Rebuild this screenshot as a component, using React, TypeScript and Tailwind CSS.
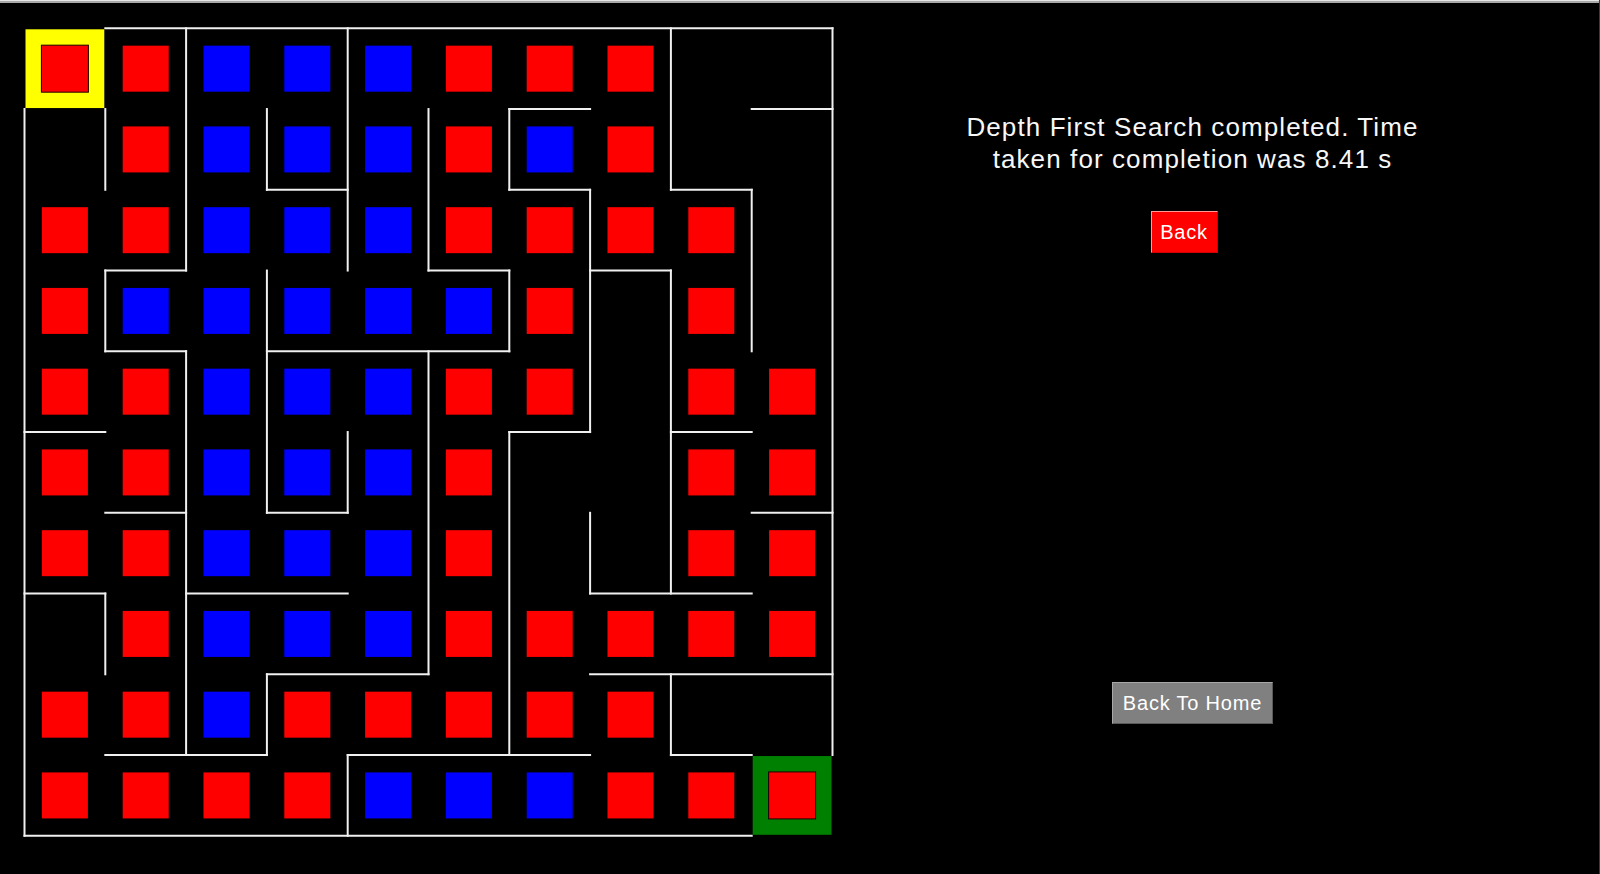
import React from 'react';

const CELL_W = 80.8;
const CELL_H = 80.75;
const OX = 2.5;
const OY = 2.3;
const SQ = 46;

// S = start, E = end, R = visited, B = path, . = not reached
const GRID = [
  'SRBBBRRR..',
  '.RBBBRBR..',
  'RRBBBRRRR.',
  'RBBBBBR.R.',
  'RRBBBRR.RR',
  'RRBBBR..RR',
  'RRBBBR..RR',
  '.RBBBRRRRR',
  'RRBRRRRR..',
  'RRRRBBBRRE',
];

// [row line, from col, to col]
const H_WALLS: [number, number, number][] = [
  [0, 1, 10], [10, 0, 9],
  [1, 9, 10], [1, 6, 7],
  [2, 3, 4], [2, 6, 7], [2, 8, 9],
  [3, 1, 2], [3, 5, 6], [3, 7, 8],
  [4, 1, 2], [4, 3, 6],
  [5, 0, 1], [5, 6, 7], [5, 8, 9],
  [6, 1, 2], [6, 3, 4], [6, 9, 10],
  [7, 0, 1], [7, 2, 4], [7, 7, 9],
  [8, 3, 5], [8, 7, 10],
  [9, 1, 3], [9, 4, 7], [9, 8, 9],
];

// [col line, from row, to row]
const V_WALLS: [number, number, number][] = [
  [0, 1, 10], [10, 0, 9],
  [1, 1, 2], [1, 3, 4], [1, 7, 8],
  [2, 0, 3], [2, 4, 9],
  [3, 1, 2], [3, 3, 6], [3, 8, 9],
  [4, 0, 3], [4, 5, 6], [4, 9, 10],
  [5, 1, 3], [5, 4, 8],
  [6, 1, 2], [6, 3, 4], [6, 5, 9],
  [7, 2, 5], [7, 6, 7],
  [8, 0, 2], [8, 3, 7], [8, 8, 9],
  [9, 2, 4],
];

const gx = (c: number) => OX + c * CELL_W;
const gy = (r: number) => OY + r * CELL_H;

const Maze: React.FC = () => {
  const pad = (CELL_W - SQ) / 2;
  const padY = (CELL_H - SQ) / 2;

  return (
    <svg width={814} height={814} viewBox="0 0 814 814" className="block shrink-0">
      {H_WALLS.map(([r, a, b], i) => (
        <line key={`h${i}`} x1={gx(a)} y1={gy(r)} x2={gx(b)} y2={gy(r)} stroke="#f0f0f0" strokeWidth={2} strokeLinecap="square" />
      ))}
      {V_WALLS.map(([c, a, b], i) => (
        <line key={`v${i}`} x1={gx(c)} y1={gy(a)} x2={gx(c)} y2={gy(b)} stroke="#f0f0f0" strokeWidth={2} strokeLinecap="square" />
      ))}

      {GRID.map((row, r) =>
        row.split('').map((cell, c) => {
          const x = gx(c);
          const y = gy(r);
          if (cell === 'S' || cell === 'E') {
            return (
              <g key={`${r}-${c}`}>
                <rect x={x + 1} y={y + 1} width={CELL_W - 2} height={CELL_H - 2} fill={cell === 'S' ? '#ffff00' : '#008000'} />
                <rect x={x + pad - 0.5} y={y + padY - 0.5} width={SQ + 1} height={SQ + 1} fill="#ff0000" stroke="#1a0000" strokeWidth={1} />
              </g>
            );
          }
          if (cell === '.') return null;
          return (
            <rect
              key={`${r}-${c}`}
              x={x + pad}
              y={y + padY}
              width={SQ}
              height={SQ}
              fill={cell === 'B' ? '#0000ff' : '#ff0000'}
            />
          );
        })
      )}
    </svg>
  );
};

export default function App() {
  return (
    <div className="w-full h-[874px] bg-black overflow-hidden flex flex-col border-r border-[#3a3a3a] font-['Liberation_Sans',Arial,sans-serif]">
      {/* window edge */}
      <div className="h-[1px] bg-[#e6e6e6] shrink-0" />
      <div className="h-[2px] bg-[#a9a9a9] shrink-0" />

      <div className="flex flex-1">
        <div className="ml-[22px] mt-[23px]">
          <Maze />
        </div>

        <div className="flex-1 flex flex-col items-center pt-[108px] pr-[50px]">
          <p className="text-[26px] leading-[32px] tracking-[1.1px] text-[#f7f7f7] text-center">
            Depth First Search completed. Time
            <br />
            taken for completion was 8.41 s
          </p>

          <button className="mt-[36px] mr-[17px] w-[67px] h-[42px] flex items-center justify-center bg-[#ff0000] text-white text-[20px] tracking-[0.8px] border border-t-[#ff9a9a] border-l-[#ff9a9a] border-r-[#d00000] border-b-[#d00000]">
            Back
          </button>

          <button className="mt-[429px] w-[161px] h-[42px] flex items-center justify-center bg-[#808080] text-white text-[20px] tracking-[0.8px] border border-t-[#a8a8a8] border-l-[#a8a8a8] border-r-[#5a5a5a] border-b-[#5a5a5a]">
            Back To Home
          </button>
        </div>
      </div>
    </div>
  );
}
